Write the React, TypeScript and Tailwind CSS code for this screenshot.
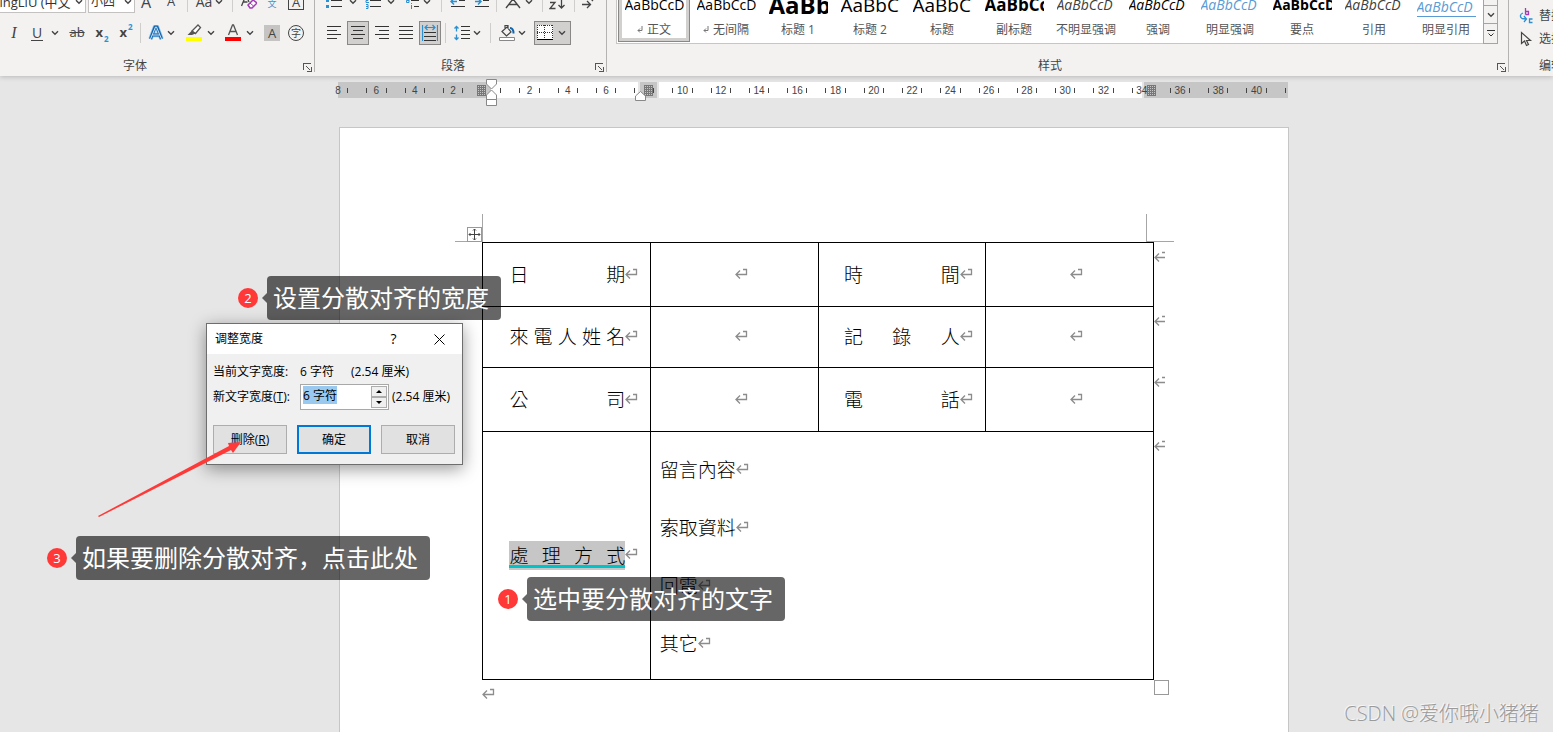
import React, { useEffect, useRef, useState } from "react";

const latin = "font-['Open_Sans','Noto_Sans_CJK_SC',sans-serif]";

const Chevron = () => (
  <svg width="8" height="6" viewBox="0 0 8 6" fill="none" stroke="#444" strokeWidth="1.4">
    <path d="M1 1.2l3 3 3-3" />
  </svg>
);

const Tool = ({ label, className, children }: any) => (
  <button
    aria-label={label}
    className={"flex h-6 shrink-0 items-center justify-center text-[#444] " + className}
  >
    {children}
  </button>
);

const Drop = ({ className = "w-3" }: any) => (
  <Tool label="更多" className={className}>
    <Chevron />
  </Tool>
);

const Divider = ({ className = "" }: any) => (
  <div className={"h-5 w-px shrink-0 bg-[#d0cecc] " + className} />
);

const Launcher = () => (
  <button aria-label="对话框启动器" className="absolute right-0.5 bottom-1">
    <svg width="9" height="9" viewBox="0 0 9 9" fill="none" stroke="#555" shapeRendering="crispEdges">
      <path d="M.5 7V.5H8M3 3l4 4M8 4v4H4" />
    </svg>
  </button>
);

const Group = ({ title, className = "", titleClass = "", children }: any) => (
  <section className={"relative flex h-[76px] flex-col justify-end " + className}>
    {children}
    <h2 className={"h-5 text-xs leading-5 text-[#444] " + titleClass}>{title}</h2>
  </section>
);

const GroupEdge = () => <div className="h-[72px] w-px shrink-0 bg-[#b5b3b1]" />;

const Lines = ({ rows }: { rows: number[][] }) => (
  <svg width="14" height="14" viewBox="0 0 14 14" stroke="#333" shapeRendering="crispEdges">
    {rows.map((r, i) => (
      <path key={i} d={`M${r[0]} ${i * 4 + 0.5}H${r[1]}`} />
    ))}
  </svg>
);

const FontGroup = () => (
  <Group title="字体" className="w-[314px] shrink-0" titleClass="pr-11 text-center">
    <div className="mb-2 flex h-[22px] shrink-0 items-center">
      <div className="relative flex h-[22px] w-[86px] items-center overflow-hidden border border-l-0 border-[#c4c2c0] bg-white">
        <select
          aria-label="字体"
          className="-ml-5 w-[91px] shrink-0 appearance-none overflow-hidden text-[13px] leading-5 text-[#333]"
        >
          <option>PMingLiU (中文正文)</option>
        </select>
        <span className="pointer-events-none absolute right-0.5">
          <Chevron />
        </span>
      </div>
      <div className="relative ml-0.5 flex h-[22px] w-[47px] items-center border border-[#c4c2c0] bg-white">
        <select aria-label="字号" className="w-full appearance-none pl-0.5 text-xs leading-5 text-[#333]">
          <option>小四</option>
        </select>
        <span className="pointer-events-none absolute right-0.5">
          <Chevron />
        </span>
      </div>
      <Tool label="增大字号" className="ml-0.5 w-[18px] text-base">A</Tool>
      <Tool label="减小字号" className="ml-2 w-4 text-[13px]">A</Tool>
      <Divider className="ml-2" />
      <Tool label="更改大小写" className="ml-1.5 w-5 text-sm">Aa</Tool>
      <Drop className="ml-px w-2" />
      <Divider className="ml-[9px]" />
      <Tool label="清除格式" className="ml-2 w-4">
        <svg width="16" height="16" viewBox="0 0 16 16" fill="none">
          <path d="M.5 12L5 1l3 7M2.500 8h4" stroke="#444" strokeWidth="1.300" />
          <path d="M7 11l5-5 4 3-5 5H9z" fill="#fff" stroke="#a23bb5" strokeWidth="1.500" />
          <path d="M9 9l3.500 3" stroke="#a23bb5" />
        </svg>
      </Tool>
      <Tool label="拼音指南" className="ml-[7px] w-4 pt-1">
        <span className="text-[9px] text-[#3a96d4]">文</span>
      </Tool>
      <Tool label="字符边框" className="ml-2 w-4">
        <span className="flex h-4 w-4 items-center justify-center border border-[#444] text-[13px] leading-none">A</span>
      </Tool>
    </div>
    <div className="mb-[11px] flex h-6 shrink-0 items-center">
      <Tool label="倾斜" className="ml-0.5 w-6 font-['Liberation_Serif',serif] text-base italic">I</Tool>
      <Tool label="下划线" className="w-[22px] text-sm">
        <span className="border-b border-[#444] px-px leading-[14px]">U</span>
      </Tool>
      <Drop className="w-3.5" />
      <Tool label="删除线" className="w-[30px] text-[13px]">
        <span className="px-px line-through">ab</span>
      </Tool>
      <Tool label="下标" className="w-5 text-[13px] font-bold">
        x<span className="ml-px self-end text-[8px] leading-3 text-[#2b8fd0]">2</span>
      </Tool>
      <Tool label="上标" className="w-7 text-[13px] font-bold">
        x<span className="ml-px self-start text-[8px] leading-3 text-[#2b8fd0]">2</span>
      </Tool>
      <Divider />
      <Tool label="文本效果" className="ml-1.5 w-[18px]">
        <svg width="16" height="16" viewBox="0 0 16 16" fill="none" strokeLinejoin="round">
          <path d="M2.500 14L7 2h2l4.500 12M4.500 10h7" stroke="#8cc8f2" strokeWidth="4.500" />
          <path d="M2.500 14L7 2h2l4.500 12M4.500 10h7" stroke="#1464ad" strokeWidth="3" />
          <path d="M2.500 14L7.500 2h1l5 12M4.500 10h7" stroke="#fff" strokeWidth=".8" />
        </svg>
      </Tool>
      <Drop />
      <Tool label="突出显示" className="ml-1.5 w-[22px]">
        <svg width="16" height="18" viewBox="0 0 16 18">
          <path d="M0 13h16v4H0z" fill="#ffff00" />
          <path d="M6 7l6-6 2.500 2.500-5 6z" fill="#fff" stroke="#555" strokeWidth="1.300" />
          <path d="M6 6.500l3.500 3L6 11H1.500z" fill="#555" />
        </svg>
      </Tool>
      <Drop />
      <Tool label="字体颜色" className="ml-[5px] w-[22px]">
        <svg width="16" height="18" viewBox="0 0 16 18">
          <path d="M0 13h16v4H0z" fill="#ff0000" />
          <path d="M3.500 11L7.500 1h1l4 10M5 7.500h6" fill="none" stroke="#555" strokeWidth="1.300" />
        </svg>
      </Tool>
      <Drop />
      <Tool label="字符底纹" className="ml-[7px] w-[18px]">
        <span className="flex h-4 w-4 items-center justify-center bg-[#c6c4c2] text-[13px] leading-none">A</span>
      </Tool>
      <Tool label="带圈字符" className="ml-1.5 w-[18px]">
        <span className="flex h-4 w-4 items-center justify-center rounded-full border border-[#444] text-[10px] leading-none">
          字
        </span>
      </Tool>
    </div>
    <Launcher />
  </Group>
);

const ParagraphGroup = () => (
  <Group title="段落" className="w-[291px] shrink-0" titleClass="pr-[15px] text-center">
    <div className="mb-2 flex h-[22px] shrink-0 items-center">
      <Tool label="项目符号" className="ml-[10px] w-[18px]">
        <svg width="16" height="16" viewBox="0 0 16 16" shapeRendering="crispEdges">
          <path d="M0 0h3v3H0zM0 5h3v3H0zM0 11h3v3H0z" fill="#2b8fd0" />
          <path d="M5 1.500h11M5 6.500h11M5 12.500h11" stroke="#333" />
        </svg>
      </Tool>
      <Drop className="ml-1.5" />
      <Tool label="编号" className="ml-1.5 w-5">
        <svg width="16" height="16" viewBox="0 0 16 16" fill="none">
          <path d="M1 4.500h2v2H1v2h3M1 10.500h2v4H1M1 12.500h2" stroke="#2b8fd0" />
          <path d="M5 6.500h11M5 12.500h11" stroke="#333" />
        </svg>
      </Tool>
      <Drop className="ml-1" />
      <Tool label="多级列表" className="ml-2 w-[18px]">
        <svg width="16" height="16" viewBox="0 0 16 16" fill="none">
          <path d="M2 5.500h3v3H2.500v-2H5M7.500 11v4M7.500 9v1" stroke="#2b8fd0" />
          <path d="M7 6.500h8M10 12.500h5" stroke="#333" />
        </svg>
      </Tool>
      <Drop />
      <Divider className="ml-2" />
      <Tool label="减少缩进" className="ml-2 w-4">
        <svg width="16" height="16" viewBox="0 0 16 16" fill="none">
          <path d="M7 7.500H1M4 4.500l-3 3 3 3" stroke="#2b8fd0" strokeWidth="1.500" />
          <path d="M9 6.500h6M1 12.500h14" stroke="#333" />
        </svg>
      </Tool>
      <Tool label="增加缩进" className="ml-2 w-4">
        <svg width="16" height="16" viewBox="0 0 16 16" fill="none">
          <path d="M1 7.500h6M4 4.500l3 3-3 3" stroke="#2b8fd0" strokeWidth="1.500" />
          <path d="M9 6.500h6M1 12.500h14" stroke="#333" />
        </svg>
      </Tool>
      <Divider className="ml-1.5" />
      <Tool label="中文版式" className="ml-2 w-4">
        <svg width="16" height="16" viewBox="0 0 16 16" fill="none" stroke="#444" strokeWidth="1.400">
          <path d="M1 14L8 5l7 9M4 10.500h8M8 5V1" />
        </svg>
      </Tool>
      <Drop className="ml-1" />
      <Divider className="ml-[9px]" />
      <Tool label="排序" className="ml-1.5 w-[18px]">
        <svg width="18" height="16" viewBox="0 0 18 16" fill="none" stroke="#444" strokeWidth="1.300">
          <path d="M1 8.500h5l-5 6h5.500M12.500 1v13M9.500 11l3 3 3-3" />
        </svg>
      </Tool>
      <Divider className="ml-[7px]" />
      <Tool label="编辑标记" className="ml-1.5 w-4">
        <svg width="16" height="16" viewBox="0 0 16 16" fill="none" stroke="#444" strokeWidth="1.300">
          <path d="M1 10.500h8M6 7l3.500 3.500L6 14M12 7l-2-2" />
        </svg>
      </Tool>
    </div>
    <div className="mb-[11px] flex h-6 shrink-0 items-center">
      <Tool label="左对齐" className="ml-2 w-[22px]">
        <Lines rows={[[0, 14], [0, 10], [0, 14], [0, 10]]} />
      </Tool>
      <Tool label="居中" className="ml-0.5 w-[22px] border border-[#8a8886] bg-[#d2d0ce]">
        <Lines rows={[[0, 14], [2, 12], [0, 14], [2, 12]]} />
      </Tool>
      <Tool label="右对齐" className="ml-0.5 w-[22px]">
        <Lines rows={[[0, 14], [4, 14], [0, 14], [4, 14]]} />
      </Tool>
      <Tool label="两端对齐" className="ml-0.5 w-[22px]">
        <Lines rows={[[0, 14], [0, 14], [0, 14], [0, 14]]} />
      </Tool>
      <Tool label="分散对齐" className="ml-0.5 w-[22px] border border-[#8a8886] bg-[#d2d0ce]">
        <svg width="16" height="18" viewBox="0 0 16 18" fill="none">
          <path d="M.5 1v16M15.500 1v16M3 3.500h10M5.500 1L3 3.500 5.500 6M10.500 1L13 3.500 10.500 6" stroke="#2b8fd0" strokeWidth="1.200" />
          <path d="M2 8.500h12M2 12.500h12M2 16.500h12" stroke="#333" />
        </svg>
      </Tool>
      <Divider className="ml-1" />
      <Tool label="行距" className="ml-[7px] w-[18px]">
        <svg width="16" height="16" viewBox="0 0 16 16" fill="none">
          <path d="M2.500 1.500v5M2.500 9.500v5M.5 3.500l2-2 2 2M.5 12.500l2 2 2-2" stroke="#2b8fd0" strokeWidth="1.300" />
          <path d="M7 1.500h9M7 5.500h9M7 9.500h9M7 13.500h9" stroke="#333" />
        </svg>
      </Tool>
      <Drop />
      <Divider className="ml-[7px]" />
      <Tool label="底纹" className="ml-[7px] w-[18px]">
        <svg width="16" height="18" viewBox="0 0 16 18" fill="none">
          <path d="M3 7.500L8 3l4 5-4.500 4zM6 5V1.500h3V5" stroke="#444" strokeWidth="1.200" />
          <path d="M11 4c3 0 3.500 2 3.500 5.500" stroke="#1464ad" strokeWidth="2" />
          <path d="M.5 13.500h15v3H.5z" fill="#fff" stroke="#888" />
        </svg>
      </Tool>
      <Drop />
      <Tool label="边框" className="ml-1.5 w-[37px] gap-[5px] border border-[#8a8886] bg-[#d2d0ce] pr-0.5">
        <svg width="16" height="16" viewBox="0 0 16 16" fill="none" stroke="#333" shapeRendering="crispEdges">
          <path d="M0 0h16v15H0z" fill="#fff" stroke="none" />
          <path d="M0 .5h16M.5 0v15M15.500 0v15M7.500 0v15M0 7.500h16" strokeDasharray="1 1" />
          <path d="M0 14.500h16" stroke="#000" />
        </svg>
        <Chevron />
      </Tool>
    </div>
    <Launcher />
  </Group>
);

const docStyles = [
  { name: "正文", sample: "AaBbCcD", look: "text-sm text-black", mark: true },
  { name: "无间隔", sample: "AaBbCcD", look: "text-sm text-black", mark: true },
  { name: "标题 1", sample: "AaBb", look: "text-2xl font-bold text-black" },
  { name: "标题 2", sample: "AaBbC", look: "text-[19px] text-black" },
  { name: "标题", sample: "AaBbC", look: "text-[19px] text-black" },
  { name: "副标题", sample: "AaBbCc", look: "text-[17px] font-bold text-black" },
  { name: "不明显强调", sample: "AaBbCcD", look: "text-sm italic text-[#404040]" },
  { name: "强调", sample: "AaBbCcD", look: "text-sm italic text-black" },
  { name: "明显强调", sample: "AaBbCcD", look: "text-sm italic text-[#5b9bd5]" },
  { name: "要点", sample: "AaBbCcD", look: "text-sm font-bold text-black" },
  { name: "引用", sample: "AaBbCcD", look: "text-sm italic text-[#404040]" },
  { name: "明显引用", sample: "AaBbCcD", look: "text-sm italic text-[#5b9bd5]", line: true },
];

const StylesGroup = () => (
  <Group title="样式" className="w-[901px] shrink-0" titleClass="pr-[15px] text-center">
    <div className="mb-3 ml-[9px] flex h-[60px] w-[882px] shrink-0">
      <div className="flex flex-1 border-b border-l border-[#c8c6c4] bg-white pl-px">
        {docStyles.map((s, i) => (
          <button
            key={s.name}
            className={
              "flex w-[72px] shrink-0 flex-col items-center justify-end " +
              (i === 0
                ? "mb-px border border-[#8a8886] pb-0.5 ring-3 ring-[#d2d0ce] ring-inset"
                : "pb-1")
            }
          >
            <span
              className={
                "h-6 w-[59px] overflow-hidden text-left leading-6 whitespace-nowrap " +
                s.look +
                (s.line ? " h-[22px] border-b border-[#5b9bd5]" : "")
              }
            >
              {s.sample}
            </span>
            <span className="mt-1 flex h-[18px] items-center gap-1 text-xs leading-[18px] whitespace-nowrap text-[#555]">
              {s.mark && (
                <svg width="6" height="8" viewBox="0 0 6 8" fill="none" stroke="#777">
                  <path d="M5 0v4.500H1M3 2.500l-2 2 2 2" />
                </svg>
              )}
              {s.name}
            </span>
          </button>
        ))}
      </div>
      <div className="flex w-[15px] flex-col justify-end border-x border-[#a6a4a2]">
        <button aria-label="向下" className="flex h-[19px] items-center justify-center border-y border-[#a6a4a2]">
          <Chevron />
        </button>
        <button aria-label="其他样式" className="flex h-5 items-center justify-center border-b border-[#a6a4a2]">
          <svg width="8" height="8" viewBox="0 0 8 8" fill="none" stroke="#333">
            <path d="M0 .5h8M1.500 3.500L4 6l2.500-2.500" />
          </svg>
        </button>
      </div>
    </div>
    <Launcher />
  </Group>
);

const EditGroup = () => (
  <Group title="编辑" className="min-w-0 flex-1 overflow-hidden" titleClass="pl-[30px] text-left whitespace-nowrap">
    <div className="mb-1.5 flex shrink-0 flex-col gap-px pl-[10px] text-xs text-[#444]">
      <button className="flex h-[22px] items-center gap-1.5 whitespace-nowrap">
        <svg className="shrink-0" width="14" height="16" viewBox="0 0 14 16" fill="none">
          <path d="M6.500 0v6.500M6.500 3.500h3v3h-3" stroke="#a23bb5" strokeWidth="1.300" />
          <path d="M4 5C1 6 .5 9 3 10.500l4 .5M5 8l2.500 3L5 14M13.500 11h-3v3.500h3" stroke="#2b8fd0" strokeWidth="1.300" />
        </svg>
        替换
      </button>
      <button className="flex h-[22px] items-center gap-1.5 whitespace-nowrap">
        <svg className="shrink-0" width="14" height="16" viewBox="0 0 14 16" fill="none" stroke="#444" strokeWidth="1.200">
          <path d="M2.500 1.500v11l3-2.500 2 4.500 2-1-2-4h4z" />
        </svg>
        选择
      </button>
    </div>
  </Group>
);

const RulerGrid = ({ className }: any) => (
  <svg className={"absolute top-[3px] " + className} width="9" height="11" viewBox="0 0 9 11" stroke="#777" shapeRendering="crispEdges">
    <path d="M0 .5h9M0 2.500h9M0 4.500h9M0 6.500h9M0 8.500h9M0 10.500h9M.5 0v11M2.500 0v11M4.500 0v11M6.500 0v11M8.500 0v11" />
  </svg>
);

const rulerMarks = ["8", "6", "4", "2", "", "2", "4", "6", "", "10", "12", "14", "16", "18", "20", "22", "24", "26", "28", "30", "32", "34", "36", "38", "40", "end"];

const Ruler = () => (
  <div className="relative mt-1.5 mr-[265px] ml-[338px] h-4 shrink-0">
    <div className="flex h-full">
      <div className="w-[153px] bg-[#c6c6c6]" />
      <div className="mr-0.5 w-[147px] bg-white" />
      <div className="mr-0.5 w-[17px] bg-[#c6c6c6]" />
      <div className="mr-0.5 flex-1 bg-white" />
      <div className="w-36 bg-[#c6c6c6]" />
    </div>
    <div className="absolute inset-y-0 -right-[26px] -left-[19px] flex items-center font-['Liberation_Sans',sans-serif] text-[10px] text-[#444]">
      {rulerMarks.map((m, i) => (
        <div key={i} className="flex flex-1 items-center justify-between px-[9px]">
          <span className={"h-[5px] w-px " + (i === 0 ? "" : "bg-[#444]")} />
          <span>{m === "end" ? "" : m}</span>
          <span className={"h-[5px] w-px " + (m === "end" ? "" : "bg-[#444]")} />
        </div>
      ))}
    </div>
    <RulerGrid className="left-[139px]" />
    <RulerGrid className="left-[306px]" />
    <RulerGrid className="right-[132px]" />
    <svg className="absolute -top-[3px] left-[148px]" width="11" height="28" viewBox="0 0 11 28" fill="#fff" stroke="#888">
      <path d="M.5.5h10V5l-5 5-5-5zM.5 20.500V16l5-5 5 5v4.500zM.5 20.500h10v6H.5z" />
    </svg>
    <svg className="absolute top-[9px] left-[297px]" width="11" height="10" viewBox="0 0 11 10" fill="#fff" stroke="#888">
      <path d="M.5 9.500V5l5-4.500 5 4.500v4.500z" />
    </svg>
  </div>
);

const Enter = () => (
  <svg className="shrink-0" width="13" height="12" viewBox="0 0 13 12" fill="none" stroke="#8c8c8c" strokeWidth="1.300">
    <path d="M8 1.500h3.500v5H1M5 2.500l-4 4 4 4" />
  </svg>
);

const RowEnd = () => (
  <svg className="absolute top-2 left-full ml-px" width="13" height="12" viewBox="0 0 13 12" fill="none" stroke="#8c8c8c" strokeWidth="1.300">
    <path d="M8 1.500h3M11 6.500H1M5 2.500l-4 4 4 4" />
  </svg>
);

const Spread = ({ text }: { text: string }) => (
  <div className="flex items-center justify-center">
    <div className={"relative flex items-center " + (text ? "w-[116px]" : "h-7 w-0")}>
      <span className="flex flex-1 justify-between">
        {text.split("").map((c, i) => (
          <span key={i}>{c}</span>
        ))}
      </span>
      <span className="absolute left-full">
        <Enter />
      </span>
    </div>
  </div>
);

const rows = [
  { height: "h-16", cells: ["日期", "", "時間", ""] },
  { height: "h-[61px]", cells: ["來電人姓名", "", "記錄人", ""] },
  { height: "h-16", cells: ["公司", "", "電話", ""] },
];
const notes = ["留言內容", "索取資料", "回電", "其它"];

const Page = () => (
  <main className="mt-[29px] mr-[264px] ml-[339px] flex-1 border border-b-0 border-[#c6c6c6] bg-white pt-[86px] pr-[134px] pl-[142px] font-['Noto_Sans_CJK_TC',sans-serif]">
    <div className="relative -mr-5 -ml-[27px] flex h-7 justify-between">
      <div className="w-7 border-r border-b border-[#a6a6a6]" />
      <div className="w-7 border-b border-l border-[#a6a6a6]" />
      <button aria-label="移动表格" className="absolute top-[13px] left-3 border border-[#999] bg-white">
        <svg width="13" height="13" viewBox="0 0 13 13" fill="none" stroke="#444">
          <path d="M6.500 1v11M1 6.500h11M5 2.500L6.500 1 8 2.500M5 10.500L6.500 12 8 10.500M2.500 5L1 6.500 2.500 8M10.500 5L12 6.500 10.500 8" />
        </svg>
      </button>
    </div>
    <table className="w-full table-fixed border-collapse text-[19px] leading-7 font-light text-black">
      <tbody>
        {rows.map((r) => (
          <tr key={r.cells[0]} className={r.height}>
            {r.cells.map((c, i) => (
              <td key={i} className={"relative border border-black p-0 pb-0.5 " + (i < 2 ? "pl-0.5" : "")}>
                <Spread text={c} />
                {i === 3 && <RowEnd />}
              </td>
            ))}
          </tr>
        ))}
        <tr className="h-[248px]">
          <td className="border border-black p-0 pl-0.5">
            <div className="flex justify-center">
              <div className="relative flex h-[29px] w-[116px] items-center">
                <span className="flex h-full flex-1 justify-between bg-[#c6c6c6]">
                  {"處理方式".split("").map((c) => (
                    <span key={c}>{c}</span>
                  ))}
                </span>
                <span className="absolute inset-x-0 bottom-0.5 h-[3px] bg-[#00c3c8]" />
                <span className="absolute left-full pb-1">
                  <Enter />
                </span>
              </div>
            </div>
          </td>
          <td colSpan={3} className="relative border border-black p-0 pl-[9px]">
            {notes.map((n) => (
              <p key={n} className="flex h-[58px] items-center">
                {n}
                <Enter />
              </p>
            ))}
            <RowEnd />
          </td>
        </tr>
      </tbody>
    </table>
    <div className="-mr-[15px] flex items-start justify-between">
      <div className="pt-2">
        <Enter />
      </div>
      <div className="h-[15px] w-[15px] border border-[#999] bg-white" />
    </div>
  </main>
);

const dialogButton = "h-[29px] w-[74px] bg-[#e1e1e1] leading-none ";

const WidthDialog = () => {
  const [width, setWidth] = useState("6 字符");
  const input = useRef<HTMLInputElement>(null);

  useEffect(() => {
    input.current?.focus();
    input.current?.select();
  }, []);

  return (
    <div
      role="dialog"
      aria-label="调整宽度"
      className="absolute top-[323px] left-[206px] w-[257px] border border-[#6e6e6e] bg-[#f0f0f0] text-xs text-black shadow-[0_4px_16px_rgba(0,0,0,0.4)]"
    >
      <div className="flex h-[30px] items-center bg-white pl-2">
        <span className="flex-1">调整宽度</span>
        <button aria-label="帮助" className="w-[45px] text-sm">?</button>
        <button aria-label="关闭" className="flex w-[46px] justify-center">
          <svg width="11" height="11" viewBox="0 0 11 11" stroke="#000">
            <path d="M.5.5l10 10M10.500.5l-10 10" />
          </svg>
        </button>
      </div>
      <div className="px-1.5 pt-[9px] pb-[10px]">
        <div className="flex h-[18px] items-center">
          <span className="w-[87px]">当前文字宽度:</span>
          <span className="w-[51px]">6 字符</span>
          <span>(2.54 厘米)</span>
        </div>
        <div className="mt-[3px] flex h-[26px] items-center">
          <label htmlFor="new-width" className="w-[87px] whitespace-nowrap">
            新文字宽度(<u>T</u>):
          </label>
          <div className="flex h-[26px] w-[89px] border border-[#a8a8a8] bg-white p-px">
            <input
              id="new-width"
              ref={input}
              value={width}
              onChange={(e) => setWidth(e.target.value)}
              className="h-[18px] min-w-0 flex-1 pl-px outline-none selection:bg-[#99c9ef] selection:text-black"
            />
            <div className="flex w-4 flex-col">
              <button aria-label="增加" className="flex flex-1 items-center justify-center border border-[#adadad] bg-[#f0f0f0]">
                <svg width="6" height="3" viewBox="0 0 6 3"><path d="M0 3l3-3 3 3z" /></svg>
              </button>
              <button aria-label="减少" className="flex flex-1 items-center justify-center border border-[#adadad] bg-[#f0f0f0]">
                <svg width="6" height="3" viewBox="0 0 6 3"><path d="M0 0h6L3 3z" /></svg>
              </button>
            </div>
          </div>
          <span className="ml-[3px] whitespace-nowrap">(2.54 厘米)</span>
        </div>
        <div className="mt-[15px] flex gap-[10px]">
          <button className={dialogButton + "border border-[#adadad]"}>
            删除(<u>R</u>)
          </button>
          <button className={dialogButton + "border-2 border-[#0078d7]"}>确定</button>
          <button className={dialogButton + "border border-[#adadad]"}>取消</button>
        </div>
      </div>
    </div>
  );
};

const Callout = ({ step, text, className }: any) => (
  <div className={"absolute flex items-center text-white " + className}>
    <span className="flex h-5 w-5 items-center justify-center rounded-full bg-[#ff3838] text-[13px] leading-none">
      {step}
    </span>
    <svg className="ml-1" width="5" height="10" viewBox="0 0 5 10">
      <path d="M5 0v10L0 5z" fill="#000" fillOpacity=".6" />
    </svg>
    <span className="h-11 rounded bg-black/60 pr-3 pl-1.5 text-2xl leading-[44px] whitespace-nowrap">{text}</span>
  </div>
);

const App = () => {
  return (
    <div className={"relative flex h-screen flex-col overflow-hidden bg-[#e6e6e6] " + latin}>
      <header className="flex h-[76px] shrink-0 overflow-x-clip bg-[#f3f2f1] shadow-[0_1px_5px_rgba(0,0,0,0.2)]">
        <FontGroup />
        <GroupEdge />
        <ParagraphGroup />
        <GroupEdge />
        <StylesGroup />
        <GroupEdge />
        <EditGroup />
      </header>
      <Ruler />
      <Page />
      <WidthDialog />
      <svg className="pointer-events-none absolute top-[440px] left-[96px]" width="148" height="80" viewBox="0 0 148 80">
        <path d="M2 76L133 6l-1-3 13-1-8 11-2-3L3 77z" fill="#ff3838" />
      </svg>
      <Callout step={2} text="设置分散对齐的宽度" className="top-[276px] left-[238px]" />
      <Callout step={3} text="如果要删除分散对齐，点击此处" className="top-[536px] left-[47px]" />
      <Callout step={1} text="选中要分散对齐的文字" className="top-[577px] left-[498px]" />
      <div className="absolute right-3.5 bottom-1 text-xl leading-7 font-light text-[#9a9a9a] [text-shadow:-1px_-1px_0_#f7f7f7]">
        CSDN @爱你哦小猪猪
      </div>
    </div>
  );
};

export default App;
